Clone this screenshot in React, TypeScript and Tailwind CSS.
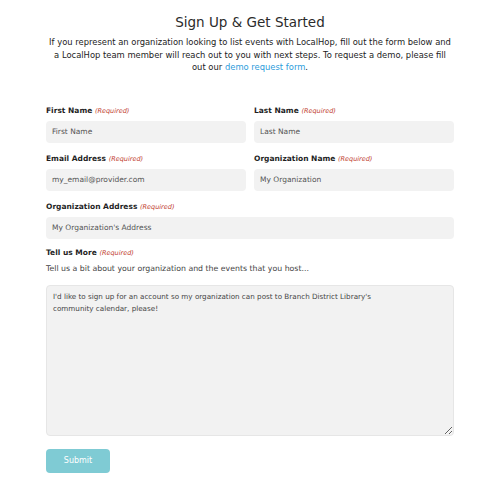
const font = { fontFamily: '"DejaVu Sans", "Open Sans", sans-serif' };

function Label({ text }: { text: string }) {
  return (
    <label className="mb-[4px] block text-[7.5px] font-bold leading-[12px] text-[#1f1f1f]">
      {text}{' '}
      <span className="text-[6.5px] font-normal italic text-[#c0392b]">(Required)</span>
    </label>
  );
}

function Field({ label, placeholder }: { label: string; placeholder: string }) {
  return (
    <div className="flex flex-col">
      <Label text={label} />
      <input
        placeholder={placeholder}
        className="h-[22px] w-full rounded-[4px] bg-[#f2f2f2] px-[6px] text-[7.5px] text-[#444] outline-none placeholder:text-[#555]"
      />
    </div>
  );
}

export default function App() {
  return (
    <div style={font} className="h-[490px] w-[500px] bg-white text-[#333]">
      <div className="px-[46px] pt-[12px]">
        <h1 className="text-center text-[13.5px] leading-[20px] font-normal text-[#2b2b2b]">
          Sign Up &amp; Get Started
        </h1>
        <p className="mt-[4px] text-center text-[8.4px] leading-[12.5px] whitespace-nowrap text-[#222]">
          If you represent an organization looking to list events with LocalHop, fill out the form below and
          <br />
          a LocalHop team member will reach out to you with next steps. To request a demo, please fill
          <br />
          out our <span className="text-[#2d9cdb]">demo request form</span>.
        </p>

        <form className="mt-[31px] flex flex-col">
          <div className="grid grid-cols-2 gap-x-[8px] gap-y-[10px]">
            <Field label="First Name" placeholder="First Name" />
            <Field label="Last Name" placeholder="Last Name" />
            <Field label="Email Address" placeholder="my_email@provider.com" />
            <Field label="Organization Name" placeholder="My Organization" />
          </div>
          <div className="mt-[10px]">
            <Field label="Organization Address" placeholder="My Organization's Address" />
          </div>
          <div className="mt-[8px] flex flex-col">
            <Label text="Tell us More" />
            <p className="mb-[11px] text-[7.8px] leading-[11px] text-[#444]">
              Tell us a bit about your organization and the events that you host...
            </p>
            <textarea
              defaultValue="I'd like to sign up for an account so my organization can post to Branch District Library's community calendar, please!"
              className="h-[151px] w-full resize-y rounded-[4px] border border-[#e6e6e6] bg-[#f2f2f2] pt-[5px] pr-[60px] pl-[6px] text-[7.2px] leading-[12px] text-[#444] outline-none"
            />
          </div>
          <button
            type="button"
            className="mt-[13px] h-[24px] w-[64px] rounded-[4px] bg-[#7fcbd4] text-[8px] font-medium text-white"
          >
            Submit
          </button>
        </form>
      </div>
    </div>
  );
}
